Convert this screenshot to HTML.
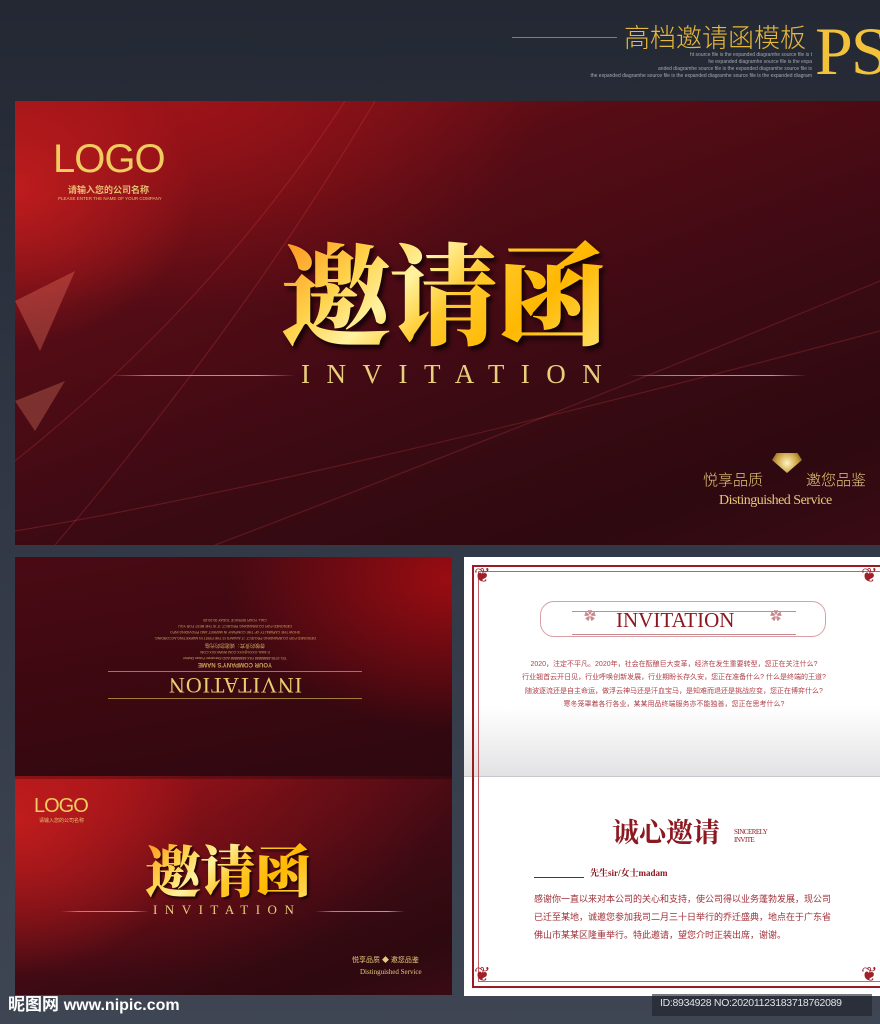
<!DOCTYPE html>
<html><head><meta charset="utf-8"><style>
*{margin:0;padding:0;box-sizing:border-box}
html,body{width:880px;height:1024px;overflow:hidden}
body{position:relative;background:linear-gradient(180deg,#232833 0%,#2f3542 40%,#3e4553 100%);font-family:"Liberation Sans","Noto Sans CJK SC",sans-serif}
.abs{position:absolute}
.card{position:absolute;overflow:hidden}
.red{background:
 radial-gradient(ellipse 260px 220px at 0% 20%,rgba(200,30,30,.85),transparent 70%),
 radial-gradient(ellipse 500px 300px at 20% 0%,rgba(170,20,25,.7),transparent 70%),
 linear-gradient(160deg,#8e1218 0%,#560c15 30%,#3c0a13 60%,#2e0910 85%,#3a0b15 100%)}
.gold{background:linear-gradient(135deg,#ff8a1a 0%,#ffd24a 25%,#fff2a0 40%,#ffc82a 55%,#ffb800 75%,#ffe066 100%);-webkit-background-clip:text;background-clip:text;color:transparent}
.serif{font-family:"Liberation Serif","Noto Serif CJK SC",serif}
.gl{height:2px;background:linear-gradient(90deg,transparent,#b8893a 20%,#c9a050 80%,transparent)}
</style></head><body>

<!-- header -->
<div class="abs" style="left:512px;top:37px;width:105px;height:1px;background:#9a7d3a"></div>
<div class="abs" style="left:624px;top:21px;font-size:26px;color:#e6b83c;font-family:'Noto Sans CJK SC',sans-serif;font-weight:300;line-height:32px">高档邀请函模板</div>
<div class="abs serif" style="left:815px;top:18px;font-size:68px;color:#f2c23a;line-height:66px;letter-spacing:-2px;width:65px;overflow:hidden;white-space:nowrap">PSD</div>
<div class="abs" style="left:580px;top:52px;width:232px;font-size:5px;color:#a4a8b2;line-height:7px;text-align:right">ht source file is the expanded diagramhe source file is t<br>he expanded diagramhe source file is the expa<br>anded diagramhe source file is the expanded diagramhe source file is<br>the expanded diagramhe source file is the expanded diagramhe source file is the expanded diagram</div>

<!-- main card -->
<div class="card red" style="left:15px;top:101px;width:865px;height:444px">
 <svg class="abs" style="left:0;top:0" width="865" height="444"><g fill="none" stroke="rgba(255,80,80,.2)" stroke-width="1.2">
 <path d="M330 0 Q200 200 0 360"/><path d="M360 0 Q230 220 40 444"/><path d="M0 430 Q300 380 865 230"/><path d="M200 444 Q500 330 865 180"/>
 </g>
 <path d="M0 200 L60 170 L25 250 Z" fill="rgba(240,120,100,.35)"/>
 <path d="M0 300 L50 280 L20 330 Z" fill="rgba(240,140,110,.3)"/>
 </svg>
 <div class="abs" style="left:38px;top:36px;font-size:40px;color:#f0cc60;font-family:'Liberation Sans',sans-serif;font-weight:normal;letter-spacing:-1px;line-height:44px">LOGO</div>
 <div class="abs" style="left:53px;top:82px;font-size:9px;color:#e8c070;font-weight:bold">请输入您的公司名称</div>
 <div class="abs" style="left:43px;top:95px;font-size:4.5px;color:#e8c070">PLEASE ENTER THE NAME OF YOUR COMPANY</div>
 <div class="abs gold serif" style="left:266px;top:128px;font-size:110px;font-weight:900;line-height:120px;letter-spacing:-2px;font-family:'Noto Serif CJK SC',serif;filter:drop-shadow(3px 4px 2px rgba(0,0,0,.7))">邀请函</div>
 <div class="abs gl" style="left:96px;top:274px;width:184px;height:1px"></div>
 <div class="abs gl" style="left:614px;top:274px;width:178px;height:1px"></div>
 <div class="abs serif" style="left:286px;top:258px;font-size:27px;color:#e9cf7c;letter-spacing:16.5px;line-height:30px">INVITATION</div>
 <div class="abs" style="left:688px;top:368px;font-size:15px;color:#e8c87a;font-family:'Noto Sans CJK SC',sans-serif;font-weight:300">悦享品质</div>
 <div class="abs" style="left:757px;top:352px;width:30px;height:20px;background:radial-gradient(circle,#fff6c0,#c9a040 60%,#6a4a10);clip-path:polygon(15% 0,85% 0,100% 35%,50% 100%,0 35%)"></div>
 <div class="abs" style="left:791px;top:368px;font-size:15px;color:#e8c87a;font-family:'Noto Sans CJK SC',sans-serif;font-weight:300">邀您品鉴</div>
 <div class="abs serif" style="left:704px;top:392px;font-size:14px;color:#e8c87a;letter-spacing:-.5px">Distinguished Service</div>
</div>

<!-- bottom left -->
<div class="card" style="left:15px;top:557px;width:437px;height:438px;background:#2a0810">
 <div class="abs" style="left:0;top:0;width:437px;height:219px;background:radial-gradient(ellipse 300px 200px at 100% 10%,#9a0c12,transparent 75%),linear-gradient(170deg,#4a0a14,#3a0810 60%,#2e0810)"></div>
 <div class="abs red" style="left:0;top:219px;width:437px;height:219px"></div>
 <div class="abs" style="left:0;top:219px;width:437px;height:3px;background:rgba(0,0,0,.25)"></div>
 <div class="abs" style="left:85px;top:60px;width:270px;transform:rotate(180deg);text-align:center;color:#c9a65a">
  <div style="height:1px;margin:0 8px;border-top:1px solid #a07e3a"></div>
  <div class="serif" style="font-size:22px;color:#e8cc70;line-height:26px;letter-spacing:1px">INVITATION</div>
  <div style="height:1px;margin:0 8px 4px;border-top:1px solid #a07e3a"></div>
  <div style="font-size:6px;font-weight:bold">YOUR COMPANY'S NAME</div>
  <div style="font-size:3.5px;line-height:6px">TEL:0755-88888888 FAX:88888888 ADD:Shenzhen Futian District<br>E-MAIL:XXXX@XXX.COM WWW.XXX.COM</div>
  <div style="font-size:5px;line-height:8px">尊敬的贵宾：诚邀您的光临</div>
  <div style="font-size:3.5px;line-height:6px">DESIGNED FOR CO-BRANDING PROJECT. IT ALWAYS IS THE FIRST IN MARKETING ACCORDING.<br>SHOW THE CAPABILITY OF THE COMPANY IN MARKET AND PROVIDING INFO<br>DESIGNED FOR CO-BRANDING PROJECT. IT IS THE BEST FOR YOU<br>CALL YOUR SERVICE TODAY 00-00-00</div>
 </div>
 <div class="abs" style="left:19px;top:238px;font-size:20px;color:#f0cc60;font-family:'Liberation Sans',sans-serif;letter-spacing:-1px">LOGO</div>
 <div class="abs" style="left:24px;top:260px;font-size:5px;color:#e8c070">请输入您的公司名称</div>
 <div class="abs gold" style="left:130px;top:280px;font-size:56px;font-weight:900;line-height:64px;letter-spacing:-1px;font-family:'Noto Serif CJK SC',serif;filter:drop-shadow(2px 2px 1px rgba(0,0,0,.7))">邀请函</div>
 <div class="abs gl" style="left:46px;top:354px;width:88px;height:1px"></div>
 <div class="abs gl" style="left:300px;top:354px;width:90px;height:1px"></div>
 <div class="abs serif" style="left:138px;top:345px;font-size:13px;color:#e9cf7c;letter-spacing:7.5px">INVITATION</div>
 <div class="abs" style="left:337px;top:398px;font-size:7px;color:#e8c87a">悦享品质 ◆ 邀您品鉴</div>
 <div class="abs serif" style="left:345px;top:411px;font-size:7px;color:#e8c87a">Distinguished Service</div>
</div>

<!-- bottom right -->
<div class="card" style="left:464px;top:557px;width:416px;height:439px;background:#fff">
 <div class="abs" style="left:0;top:150px;width:416px;height:70px;background:linear-gradient(180deg,#fff,#e2e2e4)"></div>
 <div class="abs" style="left:0;top:219px;width:416px;height:1px;background:#c8c8cc"></div>
 <div class="abs" style="left:8px;top:8px;width:420px;height:423px;border:2px solid #9b1b24"></div>
 <div class="abs" style="left:14px;top:14px;width:420px;height:411px;border:1px solid #c46068"></div>
 <div class="abs" style="left:10px;top:9px;font-size:20px;color:#a0202a;line-height:20px">❦</div>
 <div class="abs" style="left:397px;top:9px;font-size:20px;color:#a0202a;line-height:20px">❦</div>
 <div class="abs" style="left:10px;top:408px;font-size:20px;color:#a0202a;line-height:20px">❦</div>
 <div class="abs" style="left:397px;top:408px;font-size:20px;color:#a0202a;line-height:20px">❦</div>
 <div class="abs" style="left:76px;top:44px;width:286px;height:36px;border:1px solid #d8a0a4;border-radius:14px"></div>
 <div class="abs" style="left:108px;top:54px;width:224px;height:24px;border-top:1px solid #c88a8e;border-bottom:1px solid #c88a8e"></div>
 <div class="abs" style="left:120px;top:50px;font-size:12px;color:#c88a8e">✿</div>
 <div class="abs" style="left:306px;top:50px;font-size:12px;color:#c88a8e">✿</div>
 <div class="abs serif" style="left:152px;top:50px;font-size:21px;color:#8c1820;line-height:26px">INVITATION</div>
 <div class="abs" style="left:40px;top:101px;width:340px;text-align:center;font-size:7px;line-height:13.3px;color:#b04048;white-space:nowrap">2020，注定不平凡。2020年，社会在酝酿巨大变革，经济在发生重要转型，您正在关注什么?<br>行业翘首云开日见，行业呼唤创新发展，行业期盼长存久安，您正在准备什么? 什么是终端的王道?<br>随波逐流还是自主命运，做浮云神马还是汗血宝马，是知难而退还是挑战应变，您正在博弈什么?<br>寒冬笼罩着各行各业，某某用品终端服务亦不能独善，您正在思考什么?</div>
 <div class="abs" style="left:148px;top:256px;font-size:27px;color:#8c1820;font-family:'Noto Serif CJK SC',serif;font-weight:bold;line-height:36px">诚心邀请</div>
 <div class="abs serif" style="left:270px;top:271px;font-size:7px;color:#8c1820;line-height:8px;letter-spacing:-.5px">SINCERELY<br>INVITE</div>
 <div class="abs" style="left:70px;top:320px;width:50px;height:1px;background:#8c1820"></div>
 <div class="abs serif" style="left:126px;top:309px;font-size:9px;color:#8c1820;font-weight:bold">先生sir/女士madam</div>
 <div class="abs" style="left:70px;top:333px;width:302px;font-size:9px;line-height:18px;color:#a03038">感谢你一直以来对本公司的关心和支持，使公司得以业务蓬勃发展，现公司已迁至某地，诚邀您参加我司二月三十日举行的乔迁盛典，地点在于广东省佛山市某某区隆重举行。特此邀请，望您介时正装出席，谢谢。</div>
</div>

<!-- footer -->
<div class="abs" style="left:8px;top:993px;font-size:17px;color:#fff;font-weight:bold;line-height:24px">昵图网 <span style="font-size:16px">www.nipic.com</span></div>
<div class="abs" style="left:652px;top:994px;width:220px;height:22px;background:rgba(30,34,42,.6)"></div>
<div class="abs" style="left:660px;top:997px;font-size:10.5px;color:#e0e2e6;letter-spacing:-.3px">ID:8934928 NO:20201123183718762089</div>
</body></html>
